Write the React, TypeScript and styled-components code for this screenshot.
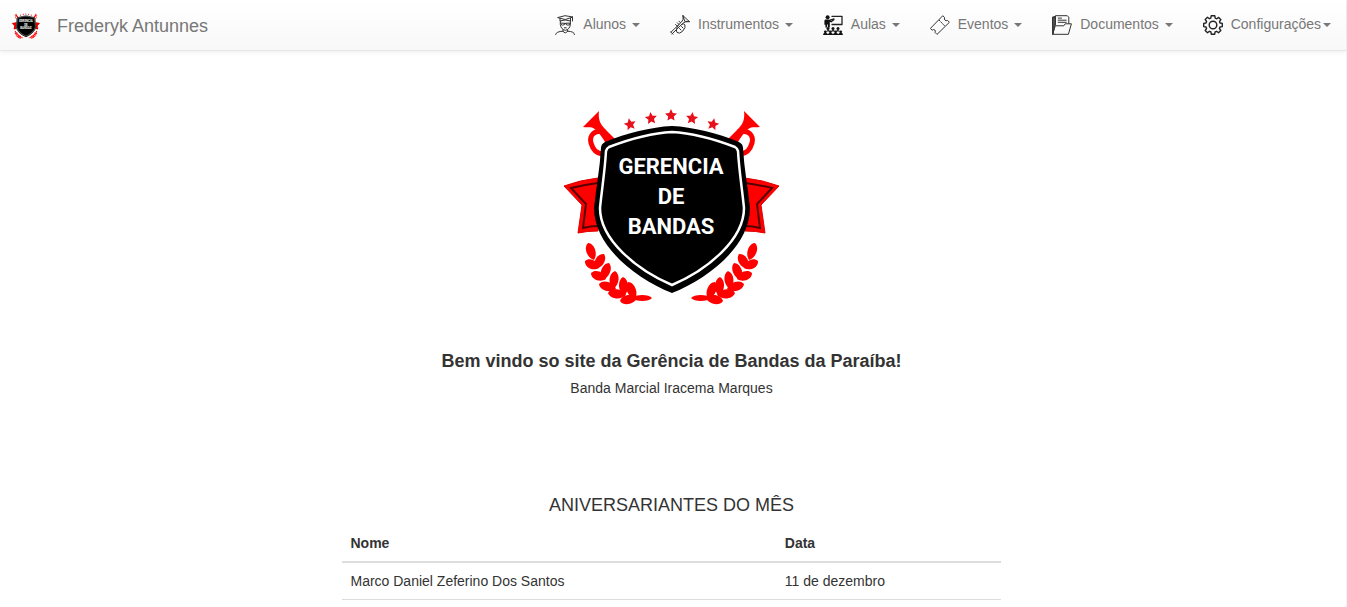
import type { ReactNode } from "react";
import styled, { createGlobalStyle } from "styled-components";

const GlobalStyle = createGlobalStyle`
  * { box-sizing: border-box; }
  body {
    margin: 0;
    background: #fff;
    color: #333;
    font-family: "Liberation Sans", Arial, sans-serif;
    font-size: 14px;
    line-height: 20px;
  }
`;

const Page = styled.div`
  min-height: 100vh;
  border-right: 1px solid #f2f2f2;
`;

const Navbar = styled.header`
  display: flex;
  align-items: center;
  justify-content: space-between;
  min-height: 51px;
  padding-left: 11px;
  background: linear-gradient(to bottom, #fff 0%, #f8f8f8 100%);
  border-bottom: 1px solid #e7e7e7;
  box-shadow: 0 1px 5px rgba(0, 0, 0, 0.075);
`;

const Brand = styled.a`
  display: flex;
  align-items: center;
  gap: 16px;
  padding-top: 2px;
  color: #777;
  font-size: 18px;
  text-decoration: none;
`;

const Menu = styled.ul`
  display: flex;
  margin: 0;
  padding: 0;
  list-style: none;
`;

const MenuButton = styled.button`
  display: flex;
  align-items: center;
  height: 50px;
  padding: 0 15px;
  border: 0;
  background: none;
  color: #777;
  font: inherit;
  cursor: pointer;
`;

const MenuLabel = styled.span`
  padding: 0 0 2px 8px;
  white-space: pre;
`;

const Caret = styled.span`
  margin-left: 2px;
  border-top: 4px solid #777;
  border-left: 4px solid transparent;
  border-right: 4px solid transparent;
`;

const Icon = styled.svg`
  width: 20px;
  height: 20px;
  fill: none;
  stroke: #333;
  stroke-width: 1;
  stroke-linejoin: round;
  stroke-linecap: round;
`;

const Main = styled.main`
  display: flex;
  flex-direction: column;
  align-items: center;
  padding: 49px 3px 0 0;
`;

const CrestSvg = styled.svg<{ $width: number }>`
  display: block;
  width: ${(p) => p.$width}px;
  height: auto;
`;

const CrestText = styled.text`
  fill: #fff;
  font-family: Roboto, sans-serif;
  font-size: 22px;
  font-weight: 700;
  text-anchor: middle;
`;

const Welcome = styled.h1`
  margin: 41px 0 7px;
  font-size: 18px;
  line-height: 20px;
  text-align: center;
`;

const BandName = styled.p`
  margin: 0;
  text-align: center;
`;

const Birthdays = styled.section`
  width: 49%;
  margin-top: 97px;
`;

const SectionTitle = styled.h2`
  margin: 0 0 10px;
  font-size: 18px;
  font-weight: 400;
  line-height: 20px;
  text-align: center;
`;

const Table = styled.table`
  width: 100%;
  border-collapse: collapse;
  table-layout: fixed;
`;

const HeadCell = styled.th<{ $width: string }>`
  width: ${(p) => p.$width};
  padding: 8px;
  border-bottom: 2px solid #ddd;
  text-align: left;
`;

const Cell = styled.td`
  padding: 8px;
  border-bottom: 1px solid #ddd;
`;

const leaf = (x1: number, y1: number, x2: number, y2: number, w: number) => {
  const dx = x2 - x1;
  const dy = y2 - y1;
  const len = Math.hypot(dx, dy);
  const nx = (-dy / len) * w;
  const ny = (dx / len) * w;
  const ax = x1 + dx * 0.15;
  const ay = y1 + dy * 0.15;
  const bx = x1 + dx * 0.75;
  const by = y1 + dy * 0.75;
  return `M${x1} ${y1}C${ax + nx} ${ay + ny} ${bx + nx} ${by + ny} ${x2} ${y2}C${bx - nx} ${by - ny} ${ax - nx} ${ay - ny} ${x1} ${y1}Z`;
};

const laurel = [
  [33, 143, 39, 160],
  [30, 161, 44, 168],
  [49, 154, 40, 169],
  [36, 173, 51, 179],
  [54, 163, 47, 180],
  [44, 184, 61, 189],
  [60, 171, 58, 189],
  [53, 193, 71, 195],
  [68, 177, 69, 196],
  [65, 201, 82, 198],
  [73, 182, 80, 199],
];

const STAR = "M0-6 1.8-2 6-1.6 2.8 1.4 3.6 5.6 0 3.4-3.6 5.6-2.8 1.4-6-1.6-1.8-2Z";
const stars = [
  [75, 24, -12],
  [96, 18, -6],
  [116, 15, 0],
  [137, 18, 6],
  [158, 24, 12],
];

const CrestSide = () => (
  <>
    <path fill="#f00" d="M44 11C43 19 45 24 50 29L63 42 54 50C50 41 46 35 41 30 37 26 33 28 28 27Z" />
    <path fill="none" stroke="#f00" strokeWidth="5" d="M50 32C39 29 34 36 36 43 38 50 41 53 47 54" />
    <path fill="#f00" stroke="#d00" strokeWidth="1" d="M9 86Q25 80 43 78V131Q32 131 23 133L27 105Z" />
    <path fill="none" stroke="#500" strokeWidth="2" d="M43 83Q28 85 16 88L31 104 28 128Q35 126 43 126" />
    <g fill="#f00">
      {laurel.map(([x1, y1, x2, y2]) => (
        <path key={`${x1}-${y1}`} d={leaf(x1, y1, x2, y2, 6)} />
      ))}
      <path d={leaf(97, 198, 76, 198, 4)} />
    </g>
  </>
);

const Crest = ({ width, label }: { width: number; label: string }) => (
  <CrestSvg $width={width} viewBox="2 0 230 210" role="img" aria-label={label}>
    <CrestSide />
    <g transform="matrix(-1 0 0 1 233 0)">
      <CrestSide />
    </g>
    {stars.map(([x, y, turn]) => (
      <path key={x} fill="#e8101a" d={STAR} transform={`translate(${x} ${y}) rotate(${turn})`} />
    ))}
    <path d="M117 26C96 27 72 33 50 42Q46 44 46 48C45 68 41 88 39 108 39 145 79 178 117 193 155 178 195 145 195 108 193 88 189 68 188 48Q188 44 184 42C162 33 138 27 117 26Z" />
    <path
      fill="none"
      stroke="#fff"
      strokeWidth="2.5"
      d="M117 32C97 33 75 39 54 47Q52 48 51 51C50 70 47 88 45 108 45 140 82 170 117 185 152 170 189 140 189 108 187 88 184 70 183 51Q182 48 180 47C159 39 137 33 117 32Z"
    />
    <CrestText x="116" y="74">GERENCIA</CrestText>
    <CrestText x="116" y="104">DE</CrestText>
    <CrestText x="116" y="134">BANDAS</CrestText>
  </CrestSvg>
);

const StudentIcon = () => (
  <Icon viewBox="0 0 20 20" aria-hidden="true">
    <path d="M3 2.5 10 .7 18 2 10.5 4.4ZM5 3.5V6Q10 4 15.5 6V3.2M17.5 2.5V6M5.3 6V9.5Q6 14.5 10.3 15.3 14.6 14.5 15.4 9.5V6" />
    <path d="M5.5 8.2H9.5V9.5Q7.5 11 6 9.5M11 8.2H15V9.5Q13 11 11 9.5M9.5 8.5H11M9.3 12.8H11.3M8 15V16.4L10.2 18 12.6 16.4V15M8 16.2Q1 16.4.6 19.5M12.6 16.2Q19.5 16.4 19.5 19.5" />
  </Icon>
);

const TrumpetIcon = () => (
  <Icon viewBox="0 0 20 20" aria-hidden="true">
    <path d="M13 .7 19.4 6.6Q15 6.2 12.8 8.3L2 19M13 .7Q14 5 11.5 7L1 17.2M13 .7 14.7 6.3 19.4 6.6" />
    <path d="M.5 16.7 3 19.2M8.2 10.2Q5.4 15 7 17.4 9 19.5 12.7 16.2 16.3 12 14.8 9.7 13.8 8 11.5 9.5M5.5 9.4 7.5 11.4M7.3 7.8 9 9.5M9 6.2 10.4 7.6M9.5 13.5 11 15M11.5 11.5 13 13" />
  </Icon>
);

const ClassIcon = () => (
  <Icon viewBox="0 0 20 20" aria-hidden="true">
    <path stroke="#222" strokeWidth="1.3" d="M9 1.4H19V9.5H9M7.6 4.8 11 4" />
    <g fill="#111" stroke="none">
      <circle cx="4.6" cy="2.2" r="2" />
      <path d="M2.2 4.6H6.3L8.2 5.8 11 4.2 11.5 5.1 8.2 7.5 6.8 6.8V12.5H5V9.5H4.2V12.5H2.4V9.8H1.4V5.4Z" />
      <circle cx="5" cy="13.4" r="1.5" />
      <circle cx="10" cy="13.4" r="1.5" />
      <circle cx="15" cy="13.4" r="1.5" />
      <path d="M3 16.6Q5 13.8 7 16.2H8Q10 13.8 12 16.2H13Q15 13.8 17 16.6Z" />
      <circle cx="2.3" cy="16.8" r="1.4" />
      <circle cx="7.4" cy="16.8" r="1.4" />
      <circle cx="12.6" cy="16.8" r="1.4" />
      <circle cx="17.7" cy="16.8" r="1.4" />
      <path d="M0 20Q0 17.8 2.3 17.8 4.4 17.8 4.9 19.3 5.4 17.8 7.4 17.8 9.5 17.8 10 19.3 10.5 17.8 12.6 17.8 14.6 17.8 15.1 19.3 15.6 17.8 17.7 17.8 20 17.8 20 20Z" />
    </g>
  </Icon>
);

const TicketIcon = () => (
  <Icon viewBox="0 0 20 20" aria-hidden="true">
    <path d="M.6 13.2 12.8.7 14.6 2.6Q13.9 4.2 15 5.2 16.1 6.1 17.5 5.4L19.4 7.3 7 19.4 5 17.4Q5.7 15.9 4.8 15 3.8 14.1 2.5 14.9Z" />
    <path strokeDasharray="1.5 1.5" d="M9.2 5.2 14.8 11" />
  </Icon>
);

const FolderIcon = () => (
  <Icon viewBox="0 0 20 20" aria-hidden="true">
    <path fill="#555" d="M.7 2.2 3.3 1.4V8.5L1 18.8Z" />
    <path d="M.7 19.3V2.2H3.3M3.5 9.6V.7H15.3L16.8 2.2V8.5M.9 19.3H16.4L19.4 8.8H13.2L11.8 10.8H3.6ZM6.2 3.1H9.5M6.2 5.2H14.2M6.2 7.3H14.2" />
  </Icon>
);

const GearIcon = () => (
  <Icon viewBox="0 0 20 20" aria-hidden="true">
    <path
      stroke="#222"
      strokeWidth="1.4"
      d="M8.2.8H11.8L12.2 3.1 13.8 3.8 15.7 2.4 17.9 4.7 16.5 6.6 17 8 19.3 8.4V11.6L17 12 16.4 13.5 17.8 15.4 15.5 17.7 13.6 16.3 12.1 16.9 11.7 19.2H8.3L7.9 16.9 6.4 16.3 4.5 17.7 2.2 15.4 3.6 13.5 3 12 .7 11.6V8.4L3 8 3.6 6.5 2.2 4.6 4.5 2.3 6.4 3.7 7.8 3.1Z"
    />
    <circle cx="10" cy="10" r="3.8" stroke="#222" strokeWidth="1.4" />
  </Icon>
);

const menuItems: { label: string; icon: ReactNode }[] = [
  { label: "Alunos ", icon: <StudentIcon /> },
  { label: "Instrumentos ", icon: <TrumpetIcon /> },
  { label: "Aulas ", icon: <ClassIcon /> },
  { label: "Eventos ", icon: <TicketIcon /> },
  { label: "Documentos ", icon: <FolderIcon /> },
  { label: "Configurações", icon: <GearIcon /> },
];

const birthdays = [{ name: "Marco Daniel Zeferino Dos Santos", date: "11 de dezembro" }];

export default function App() {
  return (
    <Page>
      <GlobalStyle />
      <Navbar>
        <Brand href="#">
          <Crest width={30} label="Gerencia de Bandas" />
          Frederyk Antunnes
        </Brand>
        <nav>
          <Menu>
            {menuItems.map((item) => (
              <li key={item.label}>
                <MenuButton type="button" aria-haspopup="true">
                  {item.icon}
                  <MenuLabel>{item.label}</MenuLabel>
                  <Caret />
                </MenuButton>
              </li>
            ))}
          </Menu>
        </nav>
      </Navbar>
      <Main>
        <Crest width={230} label="Gerencia de Bandas" />
        <Welcome>Bem vindo so site da Gerência de Bandas da Paraíba!</Welcome>
        <BandName>Banda Marcial Iracema Marques</BandName>
        <Birthdays>
          <SectionTitle>ANIVERSARIANTES DO MÊS</SectionTitle>
          <Table>
            <thead>
              <tr>
                <HeadCell $width="66%">Nome</HeadCell>
                <HeadCell $width="34%">Data</HeadCell>
              </tr>
            </thead>
            <tbody>
              {birthdays.map((row) => (
                <tr key={row.name}>
                  <Cell>{row.name}</Cell>
                  <Cell>{row.date}</Cell>
                </tr>
              ))}
            </tbody>
          </Table>
        </Birthdays>
      </Main>
    </Page>
  );
}
